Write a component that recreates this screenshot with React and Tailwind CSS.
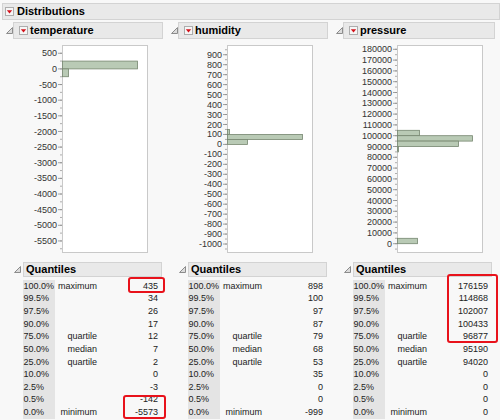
import React from 'react';

const BAR_FILL = '#b9cab5';
const BAR_LINE = '#76866f';

// chart specs in page-y coords, x relative to column left
const charts = [
  {
    name: 'temperature',
    frameX: 58,
    zero: 68.9,
    scale: 0.03128,
    major: 500,
    from: 500,
    to: -5500,
    bars: [
      { lo: 0, hi: 250, w: 75 },
      { lo: -250, hi: 0, w: 6 },
    ],
    quantiles: ['435', '34', '26', '17', '12', '7', '2', '0', '-3', '-142', '-5573'],
  },
  {
    name: 'humidity',
    frameX: 58,
    zero: 144.4,
    scale: 0.09963,
    major: 100,
    from: 900,
    to: -1000,
    bars: [
      { lo: 100, hi: 150, w: 2 },
      { lo: 50, hi: 100, w: 75 },
      { lo: 0, hi: 50, w: 20 },
    ],
    quantiles: ['898', '100', '97', '87', '79', '68', '53', '35', '0', '0', '-999'],
  },
  {
    name: 'pressure',
    frameX: 63,
    zero: 243.7,
    scale: 0.00108,
    major: 10000,
    from: 180000,
    to: 0,
    bars: [
      { lo: 100000, hi: 105000, w: 22 },
      { lo: 95000, hi: 100000, w: 75 },
      { lo: 90000, hi: 95000, w: 61 },
      { lo: 85000, hi: 90000, w: 1 },
      { lo: 0, hi: 5000, w: 20 },
    ],
    quantiles: ['176159', '114868', '102007', '100433', '96877', '95190', '94020', '0', '0', '0', '0'],
  },
];

const rows = [
  ['100.0%', 'maximum'],
  ['99.5%', ''],
  ['97.5%', ''],
  ['90.0%', ''],
  ['75.0%', 'quartile'],
  ['50.0%', 'median'],
  ['25.0%', 'quartile'],
  ['10.0%', ''],
  ['2.5%', ''],
  ['0.5%', ''],
  ['0.0%', 'minimum'],
];

const RedButton = () => (
  <svg width="9" height="9" className="shrink-0">
    <rect x="0.5" y="0.5" width="8" height="8" fill="#f6f6f6" stroke="#adadad" />
    <path d="M1.8 3.2h5.4L4.5 6.4z" fill="#d3121b" />
  </svg>
);

const Disclosure = () => (
  <svg width="7" height="7" className="shrink-0">
    <path d="M6.5 0.5V6.5H0.5Z" fill="#dcdcdc" stroke="#8c8c8c" strokeLinejoin="round" />
  </svg>
);

function Chart({ c }) {
  const top = 45;
  const bottom = 252;
  const y = (v) => c.zero - v * c.scale;
  const labels = [];
  for (let v = c.from; v >= c.to; v -= c.major) labels.push(v);
  const minors = [];
  const half = c.major / 2;
  for (let v = c.from + c.major; v >= c.to - c.major; v -= half) {
    const yy = y(v);
    if (yy > top + 1 && yy < bottom - 1) minors.push(yy);
  }
  const fx = c.frameX;
  return (
    <svg width="165" height="218" viewBox="0 39 165 218" className="block">
      <rect x={fx + 0.5} y={top + 0.5} width="85" height={bottom - top} fill="#ffffff" stroke="#c9c9c9" />
      {minors.map((yy, i) => (
        <line key={'m' + i} x1={fx - 2} x2={fx} y1={yy} y2={yy} stroke="#9a9a9a" strokeWidth="0.8" />
      ))}
      {labels.map((v) => (
        <g key={v}>
          <line x1={fx - 4} x2={fx} y1={y(v)} y2={y(v)} stroke="#8a8a8a" strokeWidth="0.8" />
          <text x={fx - 5} y={y(v)} dy="0.34em" textAnchor="end" fontSize="9" fill="#333333">
            {v}
          </text>
        </g>
      ))}
      {c.bars.map((b, i) => (
        <rect
          key={i}
          x={fx + 0.5}
          y={y(b.hi)}
          width={b.w}
          height={y(b.lo) - y(b.hi)}
          fill={BAR_FILL}
          stroke={BAR_LINE}
          strokeWidth="0.8"
        />
      ))}
    </svg>
  );
}

function Column({ c, headerW, labelW }) {
  return (
    <div className="w-[165px] shrink-0 flex flex-col">
      <div className="flex items-center h-[17px]">
        <div className="w-[9px] flex justify-center pl-[1px]">
          <Disclosure />
        </div>
        <div
          className="h-[17px] flex items-center bg-[#e9e9e9] border border-[#d3d3d3]"
          style={{ width: headerW }}
        >
          <div className="ml-[5px]">
            <RedButton />
          </div>
          <span className="ml-[2px] text-[11px] font-bold text-black leading-none">{c.name}</span>
        </div>
      </div>
      <Chart c={c} />
      <div className="flex items-center mt-[5px] h-[15px]">
        <div className="w-[19px] flex justify-end pr-[2px]">
          <Disclosure />
        </div>
        <div className="w-[139px] h-[15px] flex items-center bg-[#e9e9e9] border border-[#d3d3d3]">
          <span className="ml-[2px] text-[11px] font-bold text-black leading-none">Quantiles</span>
        </div>
      </div>
      <div className="ml-[19px] w-[139px] mt-[3px] flex flex-col text-[9px] text-[#222]">
        {rows.map((r, i) => (
          <div key={i} className="flex h-[12.67px] items-center">
            <div className="w-[32px] h-full flex items-center bg-[#e4e4e4] pl-[0.5px]">{r[0]}</div>
            <div className="h-full flex items-center justify-end" style={{ width: labelW }}>
              {r[1]}
            </div>
            <div className="flex-1 h-full flex items-center justify-end pr-[4px]">{c.quantiles[i]}</div>
          </div>
        ))}
      </div>
    </div>
  );
}

export default function App() {
  return (
    <div className="w-[500px] h-[420px] overflow-hidden relative bg-[#f8f8f8] font-['Liberation_Sans',Arial,sans-serif]">
      <div className="mt-[3px] ml-[2px] h-[17px] flex items-center bg-[#e9e9e9] border border-[#d3d3d3]">
        <div className="ml-[2px]">
          <RedButton />
        </div>
        <span className="ml-[3px] text-[11px] font-bold text-black leading-none">Distributions</span>
      </div>
      <div className="flex mt-[2px] pl-[4px]">
        <Column c={charts[0]} headerW={150} labelW={42} />
        <Column c={charts[1]} headerW={150} labelW={42} />
        <Column c={charts[2]} headerW={152} labelW={42} />
      </div>
      {/* annotation boxes */}
      <div className="absolute left-[128px] top-[277px] w-[37px] h-[16px] border-2 border-[#e8121b] rounded-[3px]" />
      <div className="absolute left-[123px] top-[395px] w-[43px] h-[24px] border-2 border-[#e8121b] rounded-[3px]" />
      <div className="absolute left-[447px] top-[274px] w-[51px] h-[69px] border-2 border-[#e8121b] rounded-[3px]" />
    </div>
  );
}
